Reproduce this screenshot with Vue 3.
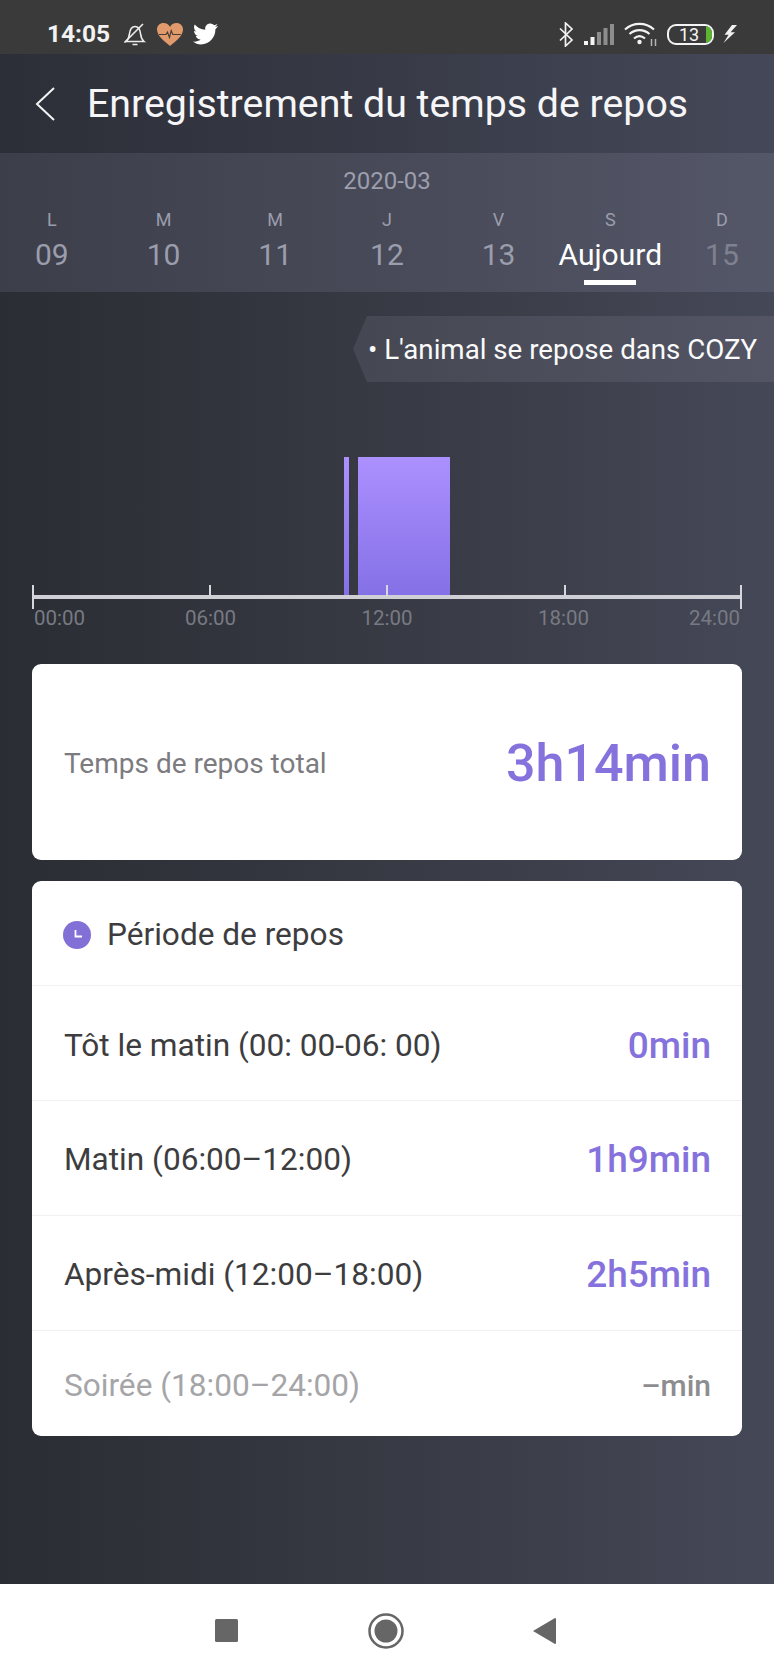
<script setup>
const days = [
  { l: 'L', n: '09' },
  { l: 'M', n: '10' },
  { l: 'M', n: '11' },
  { l: 'J', n: '12' },
  { l: 'V', n: '13' },
  { l: 'S', n: 'Aujourd', active: true },
  { l: 'D', n: '15', dim: true }
]
const bars = [
  { left: 312, width: 5 },
  { left: 326, width: 92 }
]
const ticks = [
  { left: 0, end: true },
  { left: 177 },
  { left: 354 },
  { left: 532 },
  { left: 708, end: true }
]
const hours = ['00:00', '06:00', '12:00', '18:00', '24:00']
const rows = [
  { label: 'Tôt le matin (00: 00-06: 00)', value: '0min' },
  { label: 'Matin (06:00–12:00)', value: '1h9min' },
  { label: 'Après-midi (12:00–18:00)', value: '2h5min' },
  { label: 'Soirée (18:00–24:00)', value: '–min', off: true }
]
</script>

<template>
  <div class="phone">
    <div class="status">
      <span class="time">14:05</span>
      <svg class="ic-bell" width="26" height="26" viewBox="0 0 26 26" fill="none" stroke="#ededed" stroke-width="1.6">
        <path d="M4 20.5h18c-2.4-2-3-4-3.4-7.5-.5-4.500-2.600-7.500-5.600-7.500S8 8.500 7.400 13C7 16.500 6.400 18.500 4 20.500z" />
        <path d="M10.500 23.500h5M2.500 21.500 21 3" />
      </svg>
      <svg class="ic-heart" width="28" height="25" viewBox="0 0 28 25">
        <path d="M14 24C8 19 1 14 1 7.500 1 3.500 4 1 7.500 1 10.500 1 12.800 2.600 14 5c1.200-2.400 3.500-4 6.500-4C24 1 27 3.500 27 7.500 27 14 20 19 14 24z" fill="#e09a6c" />
        <path d="M3 12.500h7l1.500-2.500 2 5.500 1.700-7 1.600 4h8" fill="none" stroke="#4a3b33" stroke-width="1.100" />
      </svg>
      <svg class="ic-bird" width="25" height="22" viewBox="0 0 24 20">
        <path fill="#fff" d="M24 2.400c-.9.400-1.800.7-2.800.8 1-.6 1.800-1.600 2.200-2.700-1 .6-2 1-3.100 1.200C19.300.7 18 0 16.600 0c-2.700 0-4.900 2.200-4.900 4.900 0 .4 0 .8.100 1.100C7.700 5.800 4.100 3.900 1.700.9 1.200 1.600 1 2.500 1 3.400c0 1.700.9 3.200 2.200 4.100-.8 0-1.600-.2-2.200-.6v.1c0 2.400 1.700 4.400 3.900 4.800-.4.100-.8.200-1.300.2-.3 0-.6 0-.9-.1.600 2 2.400 3.400 4.600 3.400-1.700 1.300-3.800 2.100-6.100 2.100-.4 0-.8 0-1.200-.1C2.200 19.300 4.800 20 7.500 20c9.100 0 14-7.500 14-14v-.6c1-.7 1.800-1.600 2.500-3z" />
      </svg>
      <span class="spacer"></span>
      <svg class="ic-bt" width="16" height="25" viewBox="0 0 16 25" fill="none" stroke="#f2f2f2" stroke-width="1.700">
        <path d="M2 6.500 14 18l-6.500 6V1L14 7 2 18.500" />
      </svg>
      <svg class="ic-signal" width="30" height="21" viewBox="0 0 30 21">
        <rect x="0" y="17" width="4" height="4" fill="#f4f4f4" />
        <rect x="6.500" y="13" width="4" height="8" fill="#f4f4f4" />
        <rect x="13" y="8" width="4" height="13" fill="#8d8d8d" />
        <rect x="19.500" y="4" width="4" height="17" fill="#8d8d8d" />
        <rect x="26" y="0" width="4" height="21" fill="#8d8d8d" />
      </svg>
      <svg class="ic-wifi" width="34" height="24" viewBox="0 0 34 24" fill="none" stroke="#f4f4f4" stroke-width="2.200">
        <path d="M1 7.500C9.500 0 21.500 0 30 7.500M5.500 12C11.500 6.800 19.500 6.800 25.500 12M10 16.500c3.500-3 7.500-3 11 0" />
        <circle cx="15.500" cy="20" r="2.200" fill="#f4f4f4" stroke="none" />
        <path d="M27.500 17v7M31.500 17v7" stroke="#b5b5b5" stroke-width="1.500" />
      </svg>
      <span class="battery">
        <span class="battery-num">13</span>
        <span class="battery-fill"></span>
      </span>
      <svg class="ic-bolt" width="14" height="20" viewBox="0 0 14 20">
        <path fill="#f0f0f0" d="M14 1 7.600 8.200H12L.5 19 5.600 10.700H1.500L9 1z" />
      </svg>
    </div>

    <header class="header">
      <svg class="back" width="20" height="34" viewBox="0 0 20 34" fill="none" stroke="#f4f4f6" stroke-width="2">
        <path d="M19 1 2 17l17 16" />
      </svg>
      <h1 class="title">Enregistrement du temps de repos</h1>
    </header>

    <section class="dates">
      <div class="month">2020-03</div>
      <div class="week">
        <div v-for="(d, i) in days" :key="i" class="day" :class="{ active: d.active, dim: d.dim }">
          <span class="day-l">{{ d.l }}</span>
          <span class="day-n">{{ d.n }}</span>
          <span class="day-u"></span>
        </div>
      </div>
    </section>

    <main class="main">
      <div class="tag-row">
        <div class="tag">• L'animal se repose dans COZY</div>
      </div>

      <div class="chart">
        <div class="plot">
          <div v-for="(b, i) in bars" :key="i" class="bar" :style="{ left: b.left + 'px', width: b.width + 'px' }"></div>
          <div class="axis"></div>
          <div v-for="(t, i) in ticks" :key="i" class="tick" :class="{ end: t.end }" :style="{ left: t.left + 'px' }"></div>
        </div>
        <div class="hours">
          <span v-for="h in hours" :key="h">{{ h }}</span>
        </div>
      </div>

      <div class="card total">
        <span class="total-label">Temps de repos total</span>
        <span class="total-value">3h14min</span>
      </div>

      <div class="card periods">
        <div class="periods-head">
          <svg width="28" height="28" viewBox="0 0 28 28">
            <circle cx="14" cy="14" r="14" fill="#8270d6" />
            <path d="M12.500 9v6.500H19" fill="none" stroke="#fff" stroke-width="1.800" />
          </svg>
          <span>Période de repos</span>
        </div>
        <div v-for="r in rows" :key="r.label" class="row" :class="{ off: r.off }">
          <span class="row-label">{{ r.label }}</span>
          <span class="row-value">{{ r.value }}</span>
        </div>
      </div>
    </main>

    <nav class="nav">
      <svg width="23" height="23" viewBox="0 0 23 23"><rect width="23" height="23" rx="1.500" fill="#666" /></svg>
      <svg width="36" height="36" viewBox="0 0 36 36">
        <circle cx="18" cy="18" r="16.500" fill="none" stroke="#666" stroke-width="2.500" />
        <circle cx="18" cy="18" r="11.500" fill="#666" />
      </svg>
      <svg width="23" height="26" viewBox="0 0 23 26"><path d="M0 13 22 0a1 1 0 0 1 1 1v24a1 1 0 0 1-1 1z" fill="#666" /></svg>
    </nav>
  </div>
</template>

<style scoped>
.phone {
  width: 774px;
  height: 1677px;
  display: flex;
  flex-direction: column;
  overflow: hidden;
  font-family: Roboto, "Liberation Sans", sans-serif;
  background: linear-gradient(90deg, #2a2d33 0%, #3a3c47 60%, #454857 100%);
}
.status {
  height: 54px;
  flex: none;
  display: flex;
  align-items: center;
  padding: 0 37px 0 47px;
  background: #3a3a3a;
  color: #f2f2f2;
  box-sizing: border-box;
}
.time {
  font-size: 24.500px;
  font-weight: 700;
  width: 75px;
  margin-top: 13px;
}
.status svg {
  flex: none;
  margin-top: 14px;
}
.ic-heart { margin-left: 8px; }
.ic-bird { margin-left: 9px; }
.spacer { flex: 1; }
.ic-signal { margin-left: 10px; }
.ic-wifi { margin-left: 10px; }
.battery {
  flex: none;
  position: relative;
  width: 47px;
  height: 21px;
  margin: 14px 0 0 9px;
  border: 2px solid #f4f4f4;
  border-radius: 9px;
  box-sizing: border-box;
  display: flex;
  align-items: center;
  justify-content: center;
  overflow: hidden;
}
.battery-num {
  font-size: 18px;
  font-weight: 400;
  color: #f4f4f4;
  margin-right: 3px;
}
.battery-fill {
  position: absolute;
  right: 0;
  top: 0;
  bottom: 0;
  width: 6px;
  background: #5cb531;
  border-radius: 0 8px 8px 0;
}
.ic-bolt { margin-left: 9px; }

.header {
  height: 99px;
  flex: none;
  display: flex;
  align-items: center;
  padding-left: 35px;
  box-sizing: border-box;
  background: linear-gradient(90deg, #2c2f37 0%, #3a3d4a 60%, #454858 100%);
}
.back { flex: none; }
.title {
  margin: 0 0 0 32px;
  font-size: 39.300px;
  font-weight: 400;
  color: #f6f6f8;
  white-space: nowrap;
}

.dates {
  height: 139px;
  flex: none;
  box-sizing: border-box;
  padding-top: 14px;
  background: linear-gradient(90deg, #3c3f4a 0%, #4a4c5b 60%, #545768 100%);
  overflow: hidden;
}
.month {
  text-align: center;
  font-size: 24px;
  line-height: 28px;
  color: #9c9eae;
}
.week {
  display: grid;
  grid-template-columns: repeat(7, 111.700px);
  margin: 0 -4px;
  padding-top: 11px;
}
.day {
  display: flex;
  flex-direction: column;
  align-items: center;
  color: #9b9dac;
  overflow: hidden;
}
.day-l {
  font-size: 18px;
  line-height: 28px;
}
.day-n {
  font-size: 30px;
  line-height: 42px;
  white-space: nowrap;
}
.day-u {
  width: 52px;
  height: 5px;
  margin-top: 4px;
  background: transparent;
}
.day.active .day-n {
  color: #fff;
}
.day.active .day-u {
  background: #fff;
}
.day.dim .day-n {
  color: #7f8190;
}

.main {
  flex: 1;
  min-height: 0;
  display: flex;
  flex-direction: column;
}
.tag-row {
  display: flex;
  justify-content: flex-end;
  padding-top: 24px;
}
.tag {
  width: 421px;
  height: 66px;
  box-sizing: border-box;
  padding-left: 15px;
  display: flex;
  align-items: center;
  font-size: 27.700px;
  color: #fafafa;
  white-space: nowrap;
  background: linear-gradient(90deg, #454752 0%, #535565 100%);
  clip-path: polygon(14px 0, 100% 0, 100% 100%, 14px 100%, 0 50%);
}
.chart {
  padding: 75px 32px 0;
}
.plot {
  position: relative;
  height: 152px;
}
.bar {
  position: absolute;
  left: 0;
  top: 0;
  height: 140px;
  background: linear-gradient(180deg, #ac90ff 0%, #8470e6 100%);
}
.axis {
  position: absolute;
  left: 0;
  width: 710px;
  top: 138px;
  height: 4px;
  background: #cfcfd6;
}
.tick {
  position: absolute;
  top: 128px;
  width: 2px;
  height: 11px;
  background: #d6d6dc;
}
.tick.end {
  height: 24px;
}
.hours {
  display: grid;
  grid-template-columns: repeat(8, 1fr);
  font-size: 20.500px;
  line-height: 26px;
  color: #787a83;
  padding: 0 2px;
  margin-top: -4px;
}
.hours span {
  grid-column: span 2;
  text-align: center;
}
.hours span:first-child {
  grid-column: span 1;
  text-align: left;
}
.hours span:last-child {
  grid-column: span 1;
  text-align: right;
}
.card {
  margin: 0 32px;
  background: #fff;
  border-radius: 9px;
}
.total {
  height: 196px;
  margin-top: 33px;
  padding: 3px 31px 0 32px;
  box-sizing: border-box;
  display: flex;
  align-items: center;
  justify-content: space-between;
}
.total-label {
  font-size: 28px;
  color: #7b7b80;
}
.total-value {
  font-size: 52px;
  font-weight: 500;
  color: #8572dc;
}
.periods {
  margin-top: 21px;
}
.periods-head {
  height: 105px;
  box-sizing: border-box;
  padding: 3px 0 0 31px;
  display: flex;
  align-items: center;
  gap: 16px;
  font-size: 31.600px;
  color: #3d3d40;
  border-bottom: 1px solid #f1f1f1;
}
.row {
  height: 115px;
  box-sizing: border-box;
  padding: 3px 31px 0 32px;
  display: flex;
  align-items: center;
  justify-content: space-between;
  border-bottom: 1px solid #f1f1f1;
}
.row:nth-child(2) {
  padding-top: 5px;
}
.row:last-child {
  border-bottom: none;
  height: 105px;
  padding-top: 4px;
}
.row-label {
  font-size: 31.600px;
  color: #3d3d40;
}
.row-value {
  font-size: 37px;
  font-weight: 500;
  color: #8572dc;
}
.row.off .row-label {
  color: #a5a5a8;
}
.row.off .row-value {
  font-size: 30px;
  font-weight: 500;
  color: #8d8d90;
}
.nav {
  height: 93px;
  flex: none;
  background: #fff;
  display: flex;
  align-items: center;
  justify-content: space-between;
  padding: 0 218px 0 215px;
  box-sizing: border-box;
}
</style>
